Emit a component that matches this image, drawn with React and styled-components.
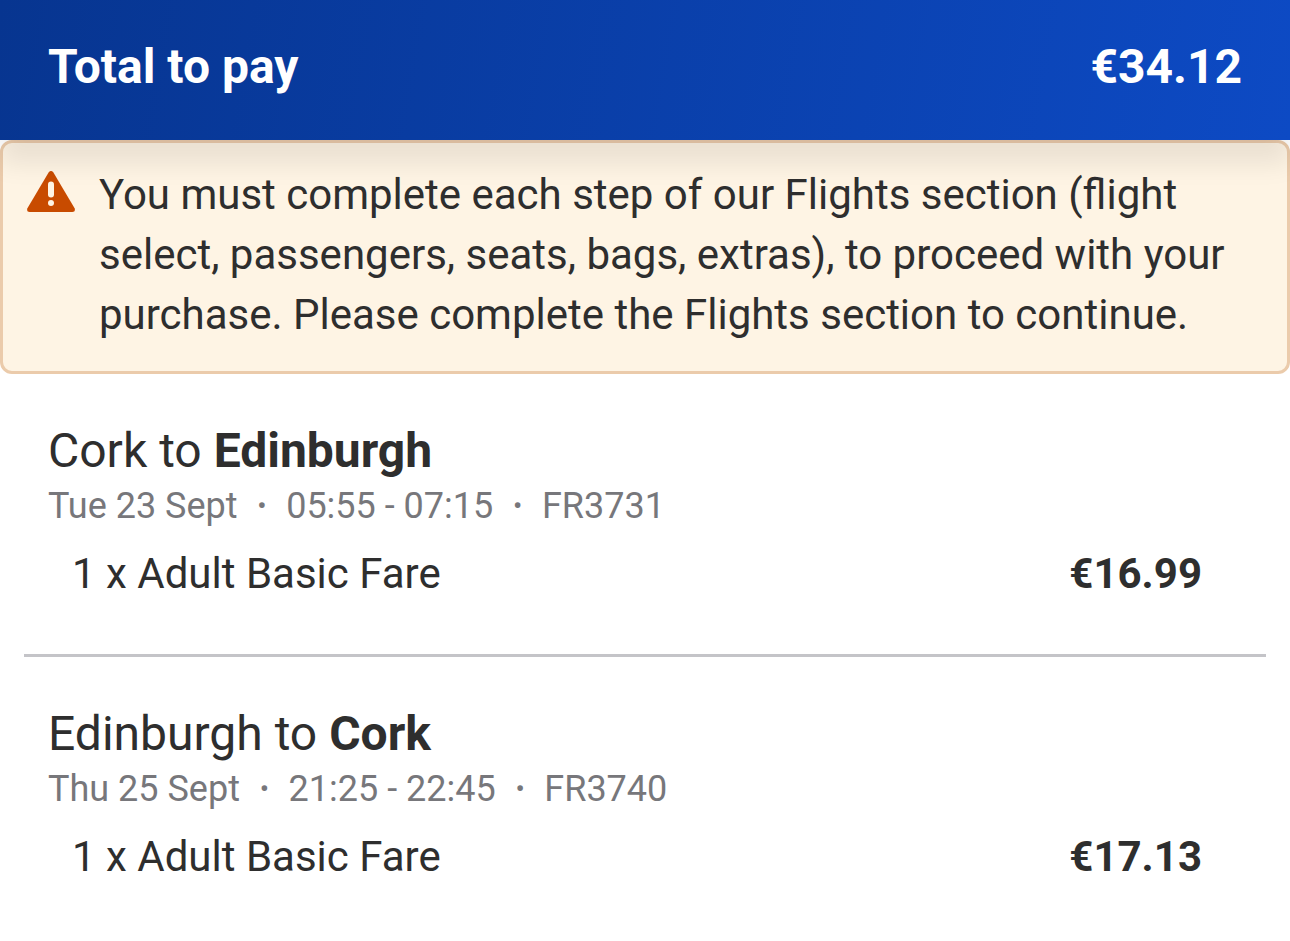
import React from "react";
import styled, { createGlobalStyle } from "styled-components";

const GlobalStyle = createGlobalStyle`
  * {
    box-sizing: border-box;
  }

  body {
    margin: 0;
    background-color: #ffffff;
    color: #2e2e2e;
    font-family: Roboto, "Liberation Sans", sans-serif;
  }
`;

const Header = styled.header`
  position: relative;
  display: flex;
  justify-content: space-between;
  align-items: center;
  padding: 31px 48px 37px;
  background: linear-gradient(100deg, #073590, #0d4ac4);
  box-shadow: 0 24px 24px 0 rgba(0, 0, 0, 0.08);
  color: white;
  font-size: 48px;
  line-height: 72px;
  font-weight: 700;
`;

const HeaderTitle = styled.h1`
  margin: 0;
  font-size: inherit;
`;

const Warning = styled.div`
  display: flex;
  gap: 24px;
  padding: 22px 24px 26px;
  border: 3px solid #ebcbab;
  border-radius: 12px;
  background-color: #fef4e4;
`;

const WarningIcon = styled.svg`
  flex: none;
  width: 48px;
  height: 42px;
  margin-top: 6px;
`;

const WarningText = styled.p`
  margin: 0;
  font-size: 42px;
  line-height: 60px;
`;

const Flight = styled.section`
  margin: 0 24px;
  padding: 47px 24px 50px;

  & + & {
    border-top: 3px solid #c4c4c8;
  }
`;

const Route = styled.h2`
  margin: 0 0 1px;
  font-size: 48px;
  line-height: 60px;
  font-weight: 400;
`;

const Details = styled.p`
  display: flex;
  gap: 20px;
  margin: 0;
  color: #77777b;
  font-size: 36px;
  line-height: 48px;
`;

const Dot = styled.span`
  font-size: 24px;
  font-weight: 700;
`;

const Fare = styled.div`
  display: flex;
  justify-content: space-between;
  padding: 14px 40px 0 24px;
  font-size: 42px;
  line-height: 60px;
`;

const flights = [
  {
    from: "Cork",
    to: "Edinburgh",
    date: "Tue 23 Sept",
    time: "05:55 - 07:15",
    number: "FR3731",
    price: "€16.99",
  },
  {
    from: "Edinburgh",
    to: "Cork",
    date: "Thu 25 Sept",
    time: "21:25 - 22:45",
    number: "FR3740",
    price: "€17.13",
  },
];

const App = () => {
  return (
    <>
      <GlobalStyle />
      <Header>
        <HeaderTitle>Total to pay</HeaderTitle>
        <span>€34.12</span>
      </Header>
      <main>
        <Warning role="alert">
          <WarningIcon viewBox="0 0 48 42" aria-hidden="true">
            <path
              d="M21.6 1.4 Q24 -1.4 26.4 1.4 L47.6 37.2 Q48.8 41 45.4 41 H2.6 Q-0.8 41 0.4 37.2 Z"
              fill="#c84b00"
            />
            <path d="M24 13.5 V23.5" stroke="#fef4e4" strokeWidth="6" strokeLinecap="round" />
            <circle cx="24" cy="32" r="3" fill="#fef4e4" />
          </WarningIcon>
          <WarningText>
            You must complete each step of our Flights section (flight select,
            passengers, seats, bags, extras), to proceed with your purchase.
            Please complete the Flights section to continue.
          </WarningText>
        </Warning>
        {flights.map((flight) => (
          <Flight key={flight.number}>
            <Route>
              {flight.from} to <b>{flight.to}</b>
            </Route>
            <Details>
              <span>{flight.date}</span>
              <Dot>•</Dot>
              <span>{flight.time}</span>
              <Dot>•</Dot>
              <span>{flight.number}</span>
            </Details>
            <Fare>
              <span>1 x Adult Basic Fare</span>
              <b>{flight.price}</b>
            </Fare>
          </Flight>
        ))}
      </main>
    </>
  );
};

export default App;
